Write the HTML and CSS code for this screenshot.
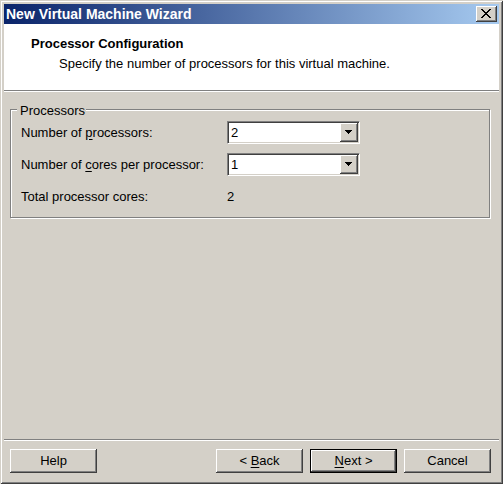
FILE: index.html
```html
<!DOCTYPE html>
<html>
<head>
<meta charset="utf-8">
<link rel="stylesheet" href="styles.css">
</head>
<body>
<div class="window">
  <div class="titlebar">
    <span class="title">New Virtual Machine Wizard</span>
    <div class="close"><svg width="10" height="9" viewBox="0 0 10 9" shape-rendering="crispEdges"><path d="M0 0h2v1h-2z M8 0h2v1h-2z M1 1h2v1h-2z M7 1h2v1h-2z M2 2h2v1h-2z M6 2h2v1h-2z M3 3h4v1h-4z M4 4h2v1h-2z M3 5h4v1h-4z M2 6h2v1h-2z M6 6h2v1h-2z M1 7h2v1h-2z M7 7h2v1h-2z M0 8h2v1h-2z M8 8h2v1h-2z" fill="#000"/></svg></div>
  </div>
  <div class="header">
    <div class="h-title">Processor Configuration</div>
    <div class="h-sub">Specify the number of processors for this virtual machine.</div>
  </div>
  <div class="sep"></div>
  <div class="content">
    <div class="group">
      <div class="group-title">Processors</div>
      <div class="rows">
        <div class="label">Number of <u>p</u>rocessors:</div>
        <div class="combo"><span class="val">2</span><span class="drop"><svg width="7" height="4" viewBox="0 0 7 4" shape-rendering="crispEdges"><path d="M0 0h7v1h-7z M1 1h5v1h-5z M2 2h3v1h-3z M3 3h1v1h-1z" fill="#000"/></svg></span></div>
        <div class="label">Number of <u>c</u>ores per processor:</div>
        <div class="combo"><span class="val">1</span><span class="drop"><svg width="7" height="4" viewBox="0 0 7 4" shape-rendering="crispEdges"><path d="M0 0h7v1h-7z M1 1h5v1h-5z M2 2h3v1h-3z M3 3h1v1h-1z" fill="#000"/></svg></span></div>
        <div class="label">Total processor cores:</div>
        <div class="label">2</div>
      </div>
    </div>
  </div>
  <div class="sep"></div>
  <div class="buttons">
    <div class="btn"><span>Help</span></div>
    <div class="spacer"></div>
    <div class="btn"><span>&lt; <u>B</u>ack</span></div>
    <div class="btn default"><span><u>N</u>ext &gt;</span></div>
    <div class="btn"><span>Cancel</span></div>
  </div>
</div>
</body>
</html>
```
FILE: styles.css
```css
html, body {
  margin: 0;
  padding: 0;
  background: #d4d0c8;
}
body {
  font-family: "Liberation Sans", Arial, sans-serif;
  font-size: 13px;
  line-height: 16px;
  color: #000;
}
.window {
  box-sizing: border-box;
  width: 503px;
  height: 484px;
  padding: 4px;
  background: #d4d0c8;
  box-shadow: inset 1px 1px 0 #d4d0c8, inset -1px -1px 0 #404040, inset 2px 2px 0 #fff, inset -2px -2px 0 #808080;
  display: flex;
  flex-direction: column;
}
.titlebar {
  height: 20px;
  background: linear-gradient(to right, #0a246a, #a6caf0);
  display: flex;
  align-items: center;
  justify-content: space-between;
  padding: 0 2px 0 2px;
}
.title {
  color: #fff;
  font-weight: bold;
  font-size: 14px;
  line-height: 20px;
}
.close {
  box-sizing: border-box;
  width: 21px;
  height: 16px;
  background: #d4d0c8;
  box-shadow: inset -1px -1px 0 #404040, inset 1px 1px 0 #fff, inset -2px -2px 0 #808080;
  display: flex;
  align-items: center;
  justify-content: center;
  padding: 0 1px 1px 0;
}
.close svg { display: block; }
.header {
  background: #fff;
  height: 66px;
  box-sizing: border-box;
  padding: 12px 0 0 27px;
}
.h-title {
  font-weight: bold;
}
.h-sub {
  margin-top: 4px;
  padding-left: 28px;
}
.sep {
  height: 1px;
  background: #808080;
  border-bottom: 1px solid #fff;
}
.content {
  flex: 1;
  padding: 17px 9px 0 6px;
}
.group {
  border: 1px solid #808080;
  box-shadow: 1px 1px 0 #fff, inset 1px 1px 0 #fff;
  padding: 0 10px 9px 10px;
}
.group-title {
  width: max-content;
  margin: -7px 0 0 -4px;
  padding: 0 1px 0 3px;
  background: #d4d0c8;
}
.rows {
  margin-top: 2px;
  display: grid;
  grid-template-columns: 206px 133px;
  grid-auto-rows: 23px;
  row-gap: 9px;
  align-items: center;
}
.combo {
  box-sizing: border-box;
  height: 23px;
  background: #fff;
  border: 1px solid;
  border-color: #808080 #fff #fff #808080;
  box-shadow: inset 1px 1px 0 #404040, inset -1px -1px 0 #d4d0c8;
  display: flex;
  align-items: center;
  padding: 1px 1px 1px 3px;
}
.val {
  flex: 1;
}
.drop {
  box-sizing: border-box;
  width: 18px;
  height: 19px;
  background: #d4d0c8;
  box-shadow: inset -1px -1px 0 #404040, inset 1px 1px 0 #fff, inset -2px -2px 0 #808080;
  display: flex;
  align-items: center;
  justify-content: center;
  padding: 0 1px 1px 0;
}
.drop svg { display: block; }
.buttons {
  display: flex;
  gap: 7px;
  padding: 8px 8px 7px 6px;
}
.spacer { flex: 1; }
.btn {
  box-sizing: border-box;
  width: 87px;
  height: 24px;
  background: #d4d0c8;
  box-shadow: inset -1px -1px 0 #404040, inset 1px 1px 0 #fff, inset -2px -2px 0 #808080;
  display: flex;
  align-items: center;
  justify-content: center;
}
.btn.default {
  border: 1px solid #000;
}
u { text-decoration: underline; text-underline-offset: 2px; }
```
